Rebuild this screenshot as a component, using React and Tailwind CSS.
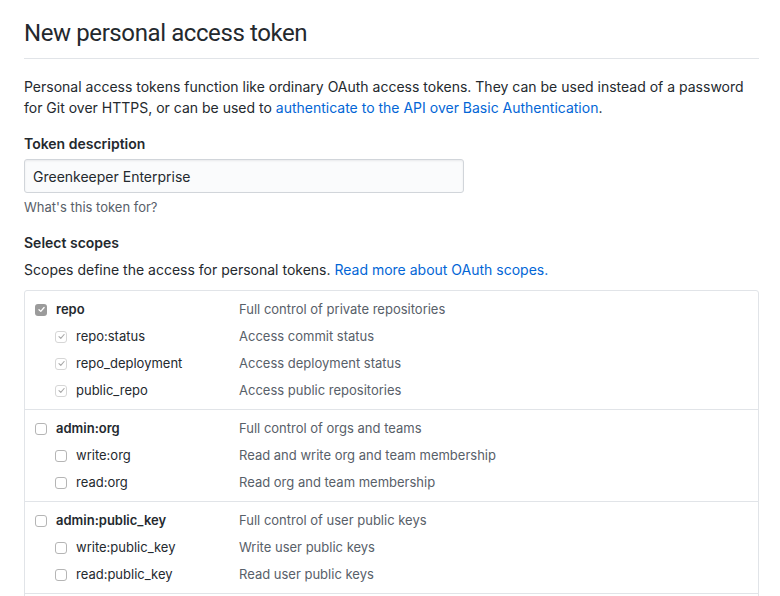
import React from "react";

const font = { fontFamily: "Inter, 'Noto Sans', sans-serif" };

function Box({ state }) {
  if (state === "parentChecked") {
    return (
      <span className="inline-flex h-[12px] w-[12px] items-center justify-center rounded-[3px] bg-[#9b9b9b]">
        <svg width="9" height="9" viewBox="0 0 9 9">
          <path d="M2 4.7 L3.8 6.4 L7.1 2.5" fill="none" stroke="#fff" strokeWidth="1.3" strokeLinecap="round" strokeLinejoin="round" />
        </svg>
      </span>
    );
  }
  if (state === "childChecked") {
    return (
      <span className="inline-flex h-[12px] w-[12px] items-center justify-center rounded-[3px] border border-[#d6d6d6] bg-white">
        <svg width="9" height="9" viewBox="0 0 9 9">
          <path d="M2 4.7 L3.8 6.4 L7.1 2.5" fill="none" stroke="#a8a8a8" strokeWidth="1.1" strokeLinecap="round" strokeLinejoin="round" />
        </svg>
      </span>
    );
  }
  return <span className="inline-block h-[12px] w-[12px] rounded-[3px] border border-[#b5b5b5] bg-white" />;
}

function Row({ name, desc, child, state }) {
  return (
    <div className="flex h-[27px] items-center text-[13px]">
      <div className={`flex w-[214px] shrink-0 items-center gap-[9px] ${child ? "pl-[30px]" : "pl-[10px]"}`}>
        <Box state={state} />
        <span className={child ? "text-[#24292e]" : "font-semibold text-[#24292e]"}>{name}</span>
      </div>
      <div className="text-[#586069]">{desc}</div>
    </div>
  );
}

const groups = [
  {
    parent: ["repo", "Full control of private repositories", "parentChecked"],
    children: [
      ["repo:status", "Access commit status", "childChecked"],
      ["repo_deployment", "Access deployment status", "childChecked"],
      ["public_repo", "Access public repositories", "childChecked"],
    ],
  },
  {
    parent: ["admin:org", "Full control of orgs and teams", "empty"],
    children: [
      ["write:org", "Read and write org and team membership", "empty"],
      ["read:org", "Read org and team membership", "empty"],
    ],
  },
  {
    parent: ["admin:public_key", "Full control of user public keys", "empty"],
    children: [
      ["write:public_key", "Write user public keys", "empty"],
      ["read:public_key", "Read user public keys", "empty"],
    ],
  },
];

export default function App() {
  return (
    <div className="h-[596px] w-[780px] overflow-hidden bg-white pl-[24px] pr-[21px] text-[14px] text-[#24292e]" style={font}>
      <div
        className="border-b border-[#e1e4e8] pt-[18px] pb-[10px] text-[24px] leading-[30px] font-normal tracking-[-0.4px]"
        style={{ fontFamily: "Roboto, sans-serif" }}
      >
        New personal access token
      </div>
      <p className="mt-[17px] leading-[21px]">
        Personal access tokens function like ordinary OAuth access tokens. They can be used instead of a password for Git over HTTPS, or can be used to{" "}
        <a className="text-[#0366d6]">authenticate to the API over Basic Authentication</a>.
      </p>
      <div className="mt-[15px] font-semibold leading-[21px]">Token description</div>
      <div className="mt-[5px] flex h-[34px] w-[440px] items-center rounded-[3px] border border-[#d1d5da] bg-[#fafbfc] px-[8px] text-[#24292e] shadow-[inset_0_1px_2px_rgba(27,31,35,0.075)]">
        Greenkeeper Enterprise
      </div>
      <div className="mt-[4px] text-[13px] leading-[20px] text-[#586069]">What's this token for?</div>
      <div className="mt-[15px] font-semibold leading-[21px]">Select scopes</div>
      <p className="mt-[6px] leading-[21px]">
        Scopes define the access for personal tokens.{" "}
        <a className="text-[#0366d6]">Read more about OAuth scopes.</a>
      </p>
      <div className="mt-[10px] rounded-t-[3px] border border-[#e1e4e8]">
        {groups.map((g, i) => (
          <div key={i} className={`py-[5px] ${i > 0 ? "border-t border-[#e1e4e8]" : ""}`}>
            <Row name={g.parent[0]} desc={g.parent[1]} state={g.parent[2]} />
            {g.children.map((c) => (
              <Row key={c[0]} name={c[0]} desc={c[1]} state={c[2]} child />
            ))}
          </div>
        ))}
        <div className="h-[20px] border-t border-[#e1e4e8]" />
      </div>
    </div>
  );
}
